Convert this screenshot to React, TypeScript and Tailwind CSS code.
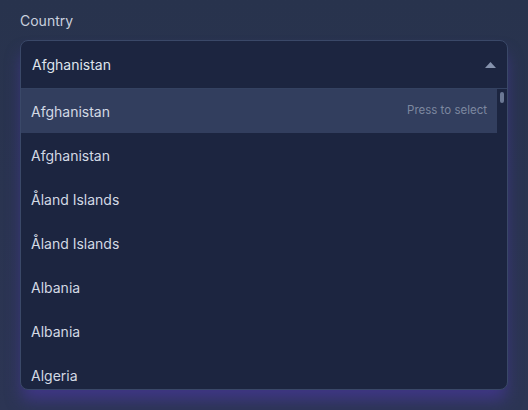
const countries = [
  'Afghanistan',
  'Afghanistan',
  'Åland Islands',
  'Åland Islands',
  'Albania',
  'Albania',
  'Algeria',
];

export default function App() {
  return (
    <div
      className="w-[528px] h-[410px] overflow-hidden bg-gradient-to-b from-[#28334d] to-[#2c3554] text-[14px] text-[#d3d9e4]"
      style={{ fontFamily: 'Inter, "Noto Sans", sans-serif' }}
    >
      <div className="px-5 pt-[13px]">
        <div className="h-[16px] leading-[16px] text-[#c9d0dd]">Country</div>
        <div className="mt-[11px] h-[350px] rounded-lg border border-[#3a4868] bg-[#1c2540] overflow-hidden flex flex-col shadow-[0_12px_16px_-2px_rgba(70,55,150,0.75)]">
          <div className="h-[48px] shrink-0 flex items-center justify-between pl-[11px] pr-[10px] border-b border-[#344261]">
            <span className="text-[#dfe4ec]">Afghanistan</span>
            <svg width="11" height="6" viewBox="0 0 11 6" className="mr-[1px]">
              <path d="M0 6 L5.5 0 L11 6 Z" fill="#8592ad" />
            </svg>
          </div>
          <div className="flex flex-1 min-h-0">
            <div className="flex-1 flex flex-col">
              {countries.map((c, i) => (
                <div
                  key={i}
                  className={
                    'h-[44px] shrink-0 flex items-center justify-between pl-[10px] pr-[10px] ' +
                    (i === 0 ? 'bg-[#323e5e]' : '')
                  }
                >
                  <span>{c}</span>
                  {i === 0 && <span className="text-[11.5px] text-[#7d88a0]">Press to select</span>}
                </div>
              ))}
            </div>
            <div className="w-[10px] shrink-0 flex justify-center pt-[3px]">
              <div className="w-[4px] h-[11px] rounded-full bg-[#6b7894]" />
            </div>
          </div>
        </div>
      </div>
    </div>
  );
}
